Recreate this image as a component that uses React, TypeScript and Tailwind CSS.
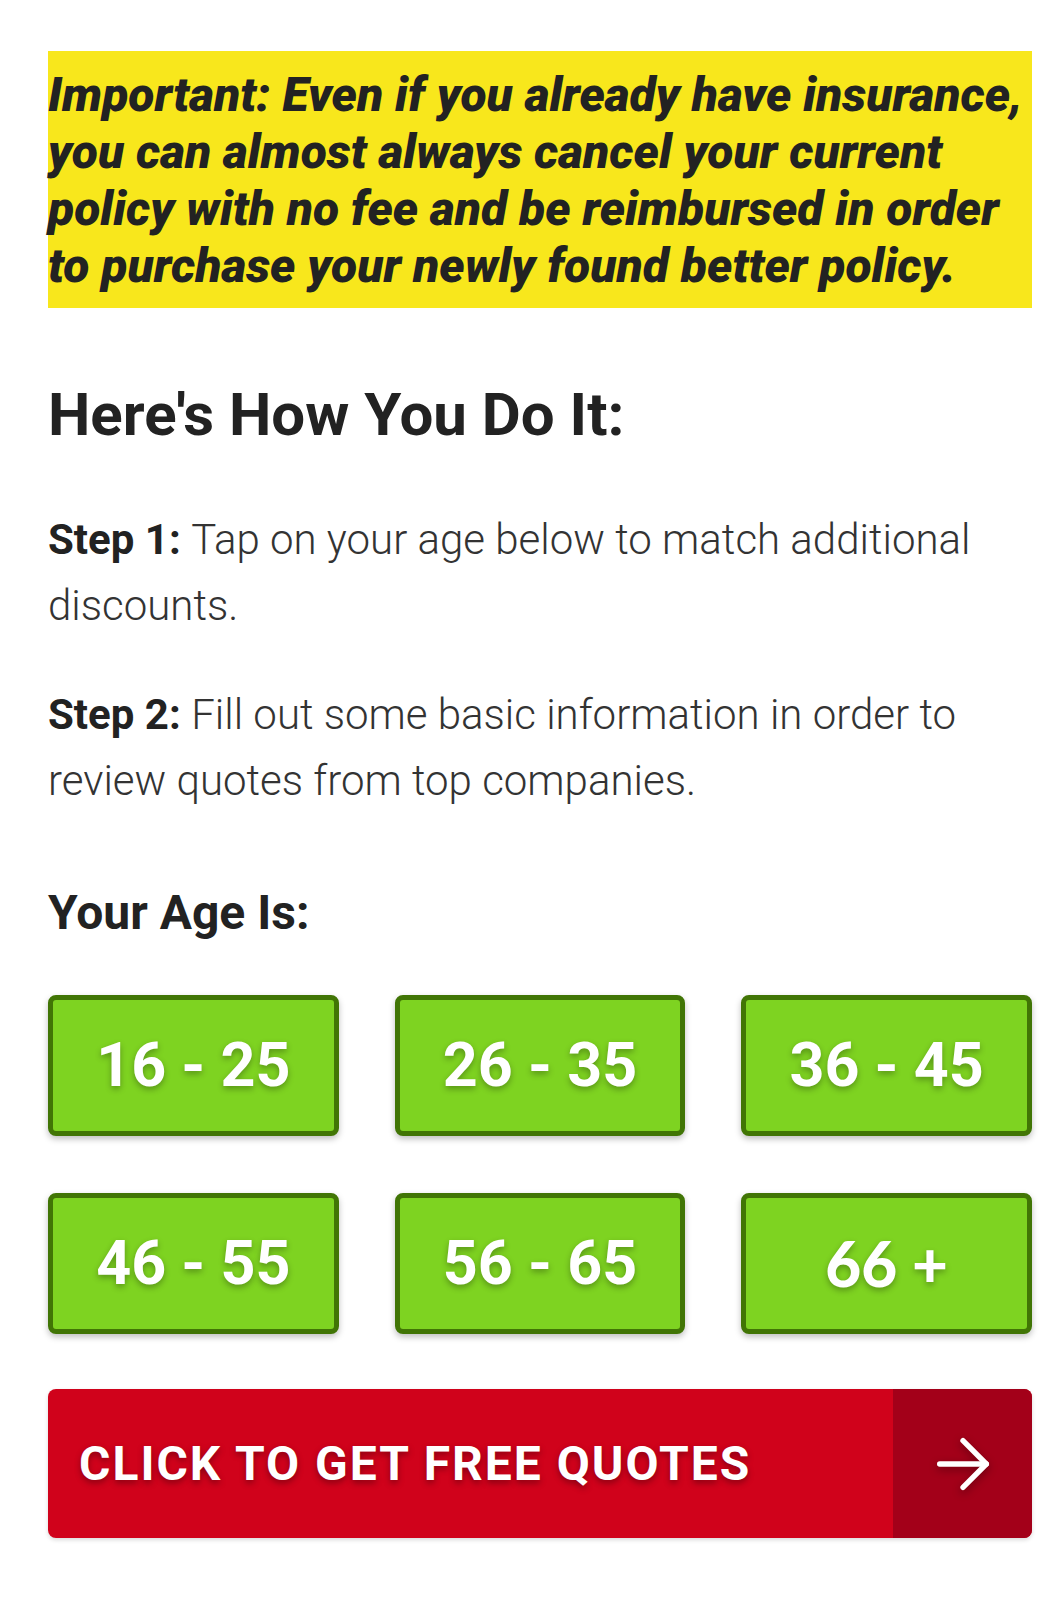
import React from 'react';
import { ArrowRight } from 'lucide-react';

const ages = ['16 - 25', '26 - 35', '36 - 45', '46 - 55', '56 - 65', '66 +'];

export default function App() {
  return (
    <div className="min-h-screen bg-white font-['Roboto',sans-serif] text-[#222]">
      <div className="pl-[48px] pr-[15px] pt-[51px] pb-[60px]">
        {/* Notice */}
        <div className="bg-[#f8e71c] pt-[15px] pb-[14px]">
          <p className="font-black italic text-[48px] leading-[57px] tracking-[0px] text-[#222]">
            Important: Even if you already have insurance, you can almost always cancel your current policy with no fee and be reimbursed in order to purchase your newly found better policy.
          </p>
        </div>

        <h2 className="mt-[72px] text-[60px] leading-[70px] font-bold text-[#222]">Here's How You Do It:</h2>

        <p className="mt-[57px] text-[42px] leading-[66px] font-light text-[#333]">
          <strong className="font-bold text-[#222]">Step 1: </strong>Tap on your age below to match additional discounts.
        </p>
        <p className="mt-[43px] text-[42px] leading-[66px] font-light text-[#333]">
          <strong className="font-bold text-[#222]">Step 2: </strong>Fill out some basic information in order to review quotes from top companies.
        </p>

        <h3 className="mt-[71px] text-[48px] leading-[56px] font-bold text-[#222]">Your Age Is:</h3>

        {/* Age buttons */}
        <div className="mt-[54px] grid grid-cols-3 gap-x-[56px] gap-y-[57px]">
          {ages.map((age) => (
            <button
              key={age}
              className="h-[141px] rounded-[8px] border-[5px] border-[#417505] bg-[#7ed321] shadow-[0_3px_6px_rgba(0,0,0,0.25)] flex items-center justify-center"
            >
              <span
                className={
                  age === '66 +'
                    ? "font-['Lato',sans-serif] font-black text-[62px] text-white [text-shadow:0_3px_6px_rgba(0,0,0,0.3)]"
                    : 'font-bold text-[61px] text-white [text-shadow:0_3px_6px_rgba(0,0,0,0.3)]'
                }
              >
                {age}
              </span>
            </button>
          ))}
        </div>

        {/* CTA */}
        <button className="mt-[55px] w-full h-[149px] rounded-[8px] overflow-hidden flex bg-[#d0021b] shadow-[0_2px_4px_rgba(0,0,0,0.15)]">
          <span className="flex-1 flex items-center pl-[31px] text-left text-[48px] font-bold tracking-[2px] text-white [text-shadow:0_3px_6px_rgba(0,0,0,0.35)]">
            CLICK TO GET FREE QUOTES
          </span>
          <span className="w-[139px] flex items-center justify-center bg-[#a30019]">
            <ArrowRight className="w-[80px] h-[80px] text-white drop-shadow-[0_3px_4px_rgba(0,0,0,0.35)]" strokeWidth={1.6} />
          </span>
        </button>
      </div>
    </div>
  );
}
